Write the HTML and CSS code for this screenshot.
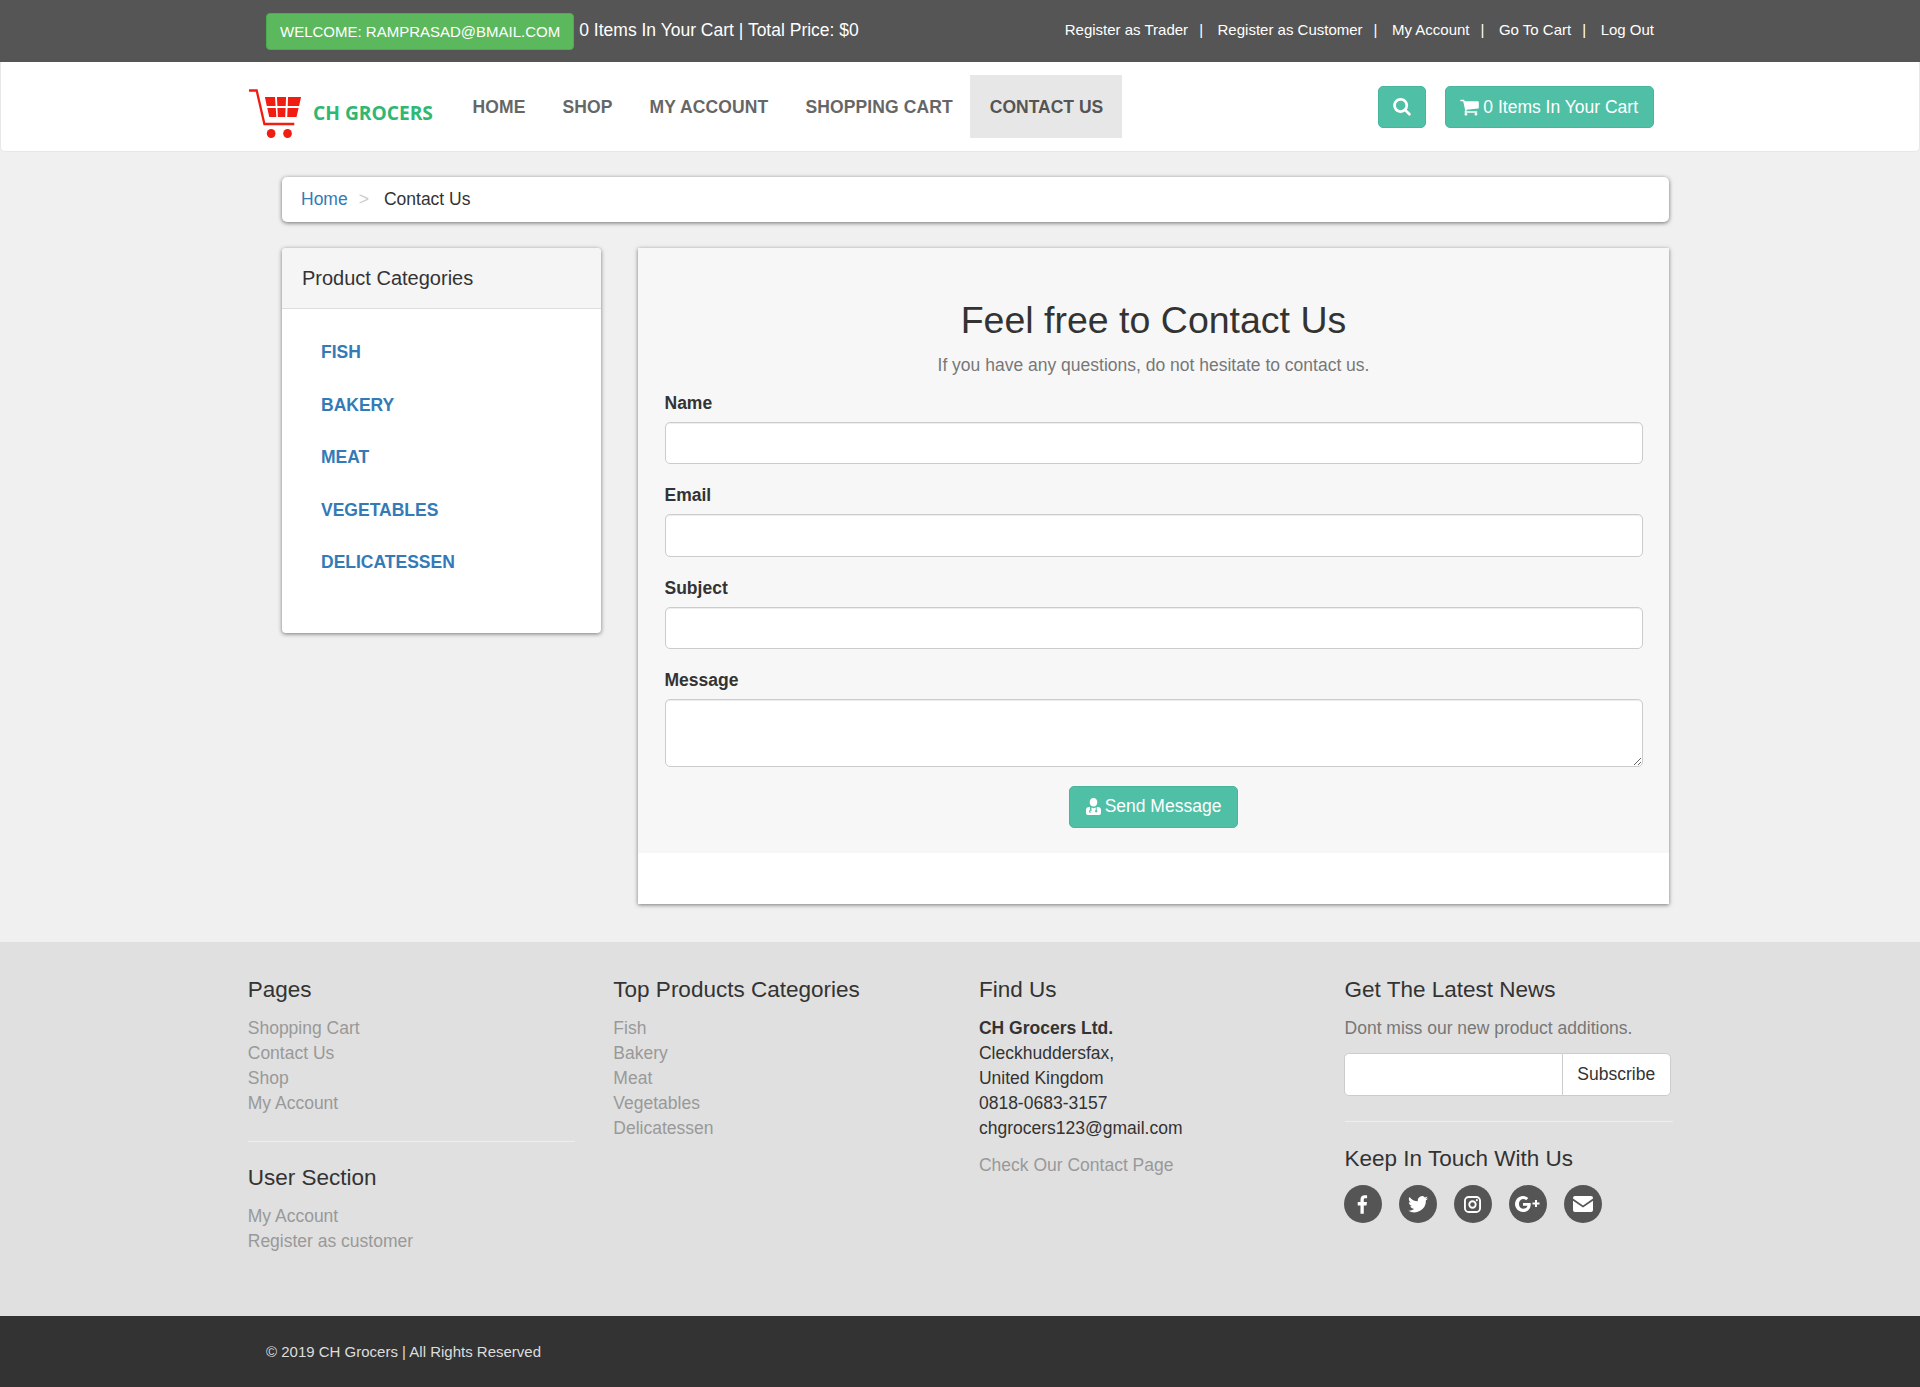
FILE: index.html
```html
<!DOCTYPE html>
<html lang="en">
<head>
<meta charset="utf-8">
<title>Contact Us - CH Grocers</title>
<link rel="stylesheet" href="styles.css">
</head>
<body>
<header class="topbar">
  <div class="topbar-left">
    <a class="welcome" href="#">WELCOME: RAMPRASAD@BMAIL.COM</a>
    <span class="cart-summary">0 Items In Your Cart | Total Price: $0</span>
  </div>
  <nav class="toplinks">
    <a href="#">Register as Trader</a><span>|</span>
    <a href="#">Register as Customer</a><span>|</span>
    <a href="#">My Account</a><span>|</span>
    <a href="#">Go To Cart</a><span>|</span>
    <a href="#">Log Out</a>
  </nav>
</header>

<div class="navbar">
  <a class="brand" href="#">
    <svg class="brand-cart" viewBox="0 0 56 50" width="54" height="50" preserveAspectRatio="none" aria-hidden="true">
      <path d="M1 1.500h8l8 33.500h31" fill="none" stroke="#f21d12" stroke-width="2.400"/>
      <path d="M17.500 8h10.500l.6 9H19.500zM30 8h9.500l-.4 9h-8.600zM41.500 8H55l-2 9H41.200zM20 19h8.800l.6 9h-7.400zM30.500 19h8.500l-.4 9h-7.600zM41 19h11.500l-2.200 9h-9.600z" fill="#f21d12"/>
      <circle cx="24" cy="44.500" r="4.500" fill="#f21d12"/>
      <circle cx="41" cy="44.500" r="4.500" fill="#f21d12"/>
    </svg>
    <span class="brand-name">CH GROCERS</span>
  </a>
  <ul class="mainnav">
    <li><a href="#">HOME</a></li>
    <li><a href="#">SHOP</a></li>
    <li><a href="#">MY ACCOUNT</a></li>
    <li><a href="#">SHOPPING CART</a></li>
    <li class="active"><a href="#">CONTACT US</a></li>
  </ul>
  <div class="nav-actions">
    <a class="btn btn-icon" href="#" aria-label="Search">
      <svg class="ico" viewBox="0 0 1664 1792" width="18" height="19"><path fill="currentColor" d="M1152 704q0-185-131.500-316.500T704 256 387.500 387.500 256 704t131.500 316.500T704 1152t316.500-131.500T1152 704zm512 832q0 52-38 90t-90 38q-54 0-90-38l-343-342q-179 124-399 124-143 0-273.500-55.500t-225-150-150-225T0 704t55.500-273.500 150-225 225-150T704 0t273.500 55.500 225 150 150 225T1408 704q0 220-124 399l343 343q37 37 37 90z"/></svg>
    </a>
    <a class="btn btn-cart" href="#">
      <svg class="ico" viewBox="0 0 1664 1792" width="19" height="20"><path fill="currentColor" d="M640 1536q0 52-38 90t-90 38-90-38-38-90 38-90 90-38 90 38 38 90zm896 0q0 52-38 90t-90 38-90-38-38-90 38-90 90-38 90 38 38 90zm128-1088v512q0 24-16.500 42.500T1607 1024L563 1146q13 60 13 70 0 16-24 64h920q26 0 45 19t19 45-19 45-45 19H448q-26 0-45-19t-19-45q0-11 8-31.500t16-36 21.500-40T445 1207L268 384H64q-26 0-45-19T0 320t19-45 45-19h256q16 0 28.500 6.500T368 278t13 24.500 8 26 5.500 29.500 4.500 26h1201q26 0 45 19t19 45z"/></svg>
      <span>0 Items In Your Cart</span>
    </a>
  </div>
</div>

<main class="content">
  <ol class="breadcrumb">
    <li><a href="#">Home</a></li>
    <li class="sep">&gt;</li>
    <li>Contact Us</li>
  </ol>
  <div class="columns">
    <aside class="sidebar">
      <h3 class="sidebar-title">Product Categories</h3>
      <ul class="categories">
        <li><a href="#">FISH</a></li>
        <li><a href="#">BAKERY</a></li>
        <li><a href="#">MEAT</a></li>
        <li><a href="#">VEGETABLES</a></li>
        <li><a href="#">DELICATESSEN</a></li>
      </ul>
    </aside>
    <section class="panel">
      <form class="contact-form">
        <h1>Feel free to Contact Us</h1>
        <p class="lead">If you have any questions, do not hesitate to contact us.</p>
        <div class="field"><label for="n">Name</label><input id="n" type="text"></div>
        <div class="field"><label for="e">Email</label><input id="e" type="text"></div>
        <div class="field"><label for="s">Subject</label><input id="s" type="text"></div>
        <div class="field"><label for="m">Message</label><textarea id="m"></textarea></div>
        <div class="form-actions">
          <button class="btn btn-send" type="button">
            <svg class="ico" viewBox="0 0 16 18" width="15" height="17"><path fill="currentColor" d="M8 0a4 4 0 0 1 4 4.500A4 4 0 0 1 8 9a4 4 0 0 1-4-4.500A4 4 0 0 1 8 0zM3.500 9.500l.8.300v3A1.700 1.700 0 0 0 3.200 14.400v1.100h2.300v-1h-1.200v-.200a.8.8 0 0 1 1.600 0h0v-1.300a1 1 0 0 0-.1 0V10.100L8 10.800l2.400-.7v2.600a1.300 1.300 0 1 0 1 0V9.800l1.100-.300A3.500 3.500 0 0 1 16 13v3a2 2 0 0 1-2 2H2a2 2 0 0 1-2-2v-3a3.500 3.500 0 0 1 3.500-3.500z"/></svg>
            <span>Send Message</span>
          </button>
        </div>
      </form>
    </section>
  </div>
</main>

<footer class="footer">
  <div class="footer-grid">
    <div class="fcol">
      <h4>Pages</h4>
      <ul class="flinks">
        <li><a href="#">Shopping Cart</a></li>
        <li><a href="#">Contact Us</a></li>
        <li><a href="#">Shop</a></li>
        <li><a href="#">My Account</a></li>
      </ul>
      <hr>
      <h4>User Section</h4>
      <ul class="flinks">
        <li><a href="#">My Account</a></li>
        <li><a href="#">Register as customer</a></li>
      </ul>
    </div>
    <div class="fcol">
      <h4>Top Products Categories</h4>
      <ul class="flinks">
        <li><a href="#">Fish</a></li>
        <li><a href="#">Bakery</a></li>
        <li><a href="#">Meat</a></li>
        <li><a href="#">Vegetables</a></li>
        <li><a href="#">Delicatessen</a></li>
      </ul>
    </div>
    <div class="fcol">
      <h4>Find Us</h4>
      <address>
        <strong>CH Grocers Ltd.</strong><br>
        Cleckhuddersfax,<br>
        United Kingdom<br>
        0818-0683-3157<br>
        chgrocers123@gmail.com
      </address>
      <a class="fcheck" href="#">Check Our Contact Page</a>
    </div>
    <div class="fcol">
      <h4>Get The Latest News</h4>
      <p class="fnote">Dont miss our new product additions.</p>
      <div class="subscribe"><input type="text" aria-label="Email"><button type="button">Subscribe</button></div>
      <hr class="hr-news">
      <h4>Keep In Touch With Us</h4>
      <div class="social">
        <a href="#" aria-label="Facebook"><svg viewBox="0 0 12 20" width="11" height="19"><path fill="#fff" d="M11 .2v3.100H9.200c-1.500 0-1.800.7-1.800 1.800v2.300h3.500L10.400 11H7.400v9H3.800v-9H.8V7.400h3V4.700C3.800 1.700 5.600 0 8.300 0c1.300 0 2.300.1 2.700.2z"/></svg></a>
        <a href="#" aria-label="Twitter"><svg viewBox="0 0 24 20" width="20" height="17"><path fill="#fff" d="M24 2.400c-.9.400-1.800.7-2.800.8 1-.6 1.800-1.600 2.200-2.700-1 .6-2 1-3.100 1.200A4.900 4.900 0 0 0 11.900 6.200C7.800 6 4.200 4.100 1.700.9c-1.300 2.200-.7 5.100 1.500 6.600-.8 0-1.600-.2-2.200-.6 0 2.400 1.700 4.400 3.900 4.900-.7.200-1.500.2-2.200.1.600 2 2.400 3.400 4.600 3.400A9.900 9.900 0 0 1 0 17.300 14 14 0 0 0 21.500 5c1-.7 1.800-1.600 2.500-2.600z"/></svg></a>
        <a href="#" aria-label="Instagram"><svg viewBox="0 0 18 18" width="17" height="17"><rect x="1" y="1" width="16" height="16" rx="4" fill="none" stroke="#fff" stroke-width="2"/><circle cx="9" cy="9" r="3.400" fill="none" stroke="#fff" stroke-width="2"/><circle cx="13.600" cy="4.400" r="1.100" fill="#fff"/></svg></a>
        <a href="#" aria-label="Google Plus"><svg viewBox="0 0 26 16" width="26" height="16"><path fill="#fff" d="M8 7v2.800h4.500c-.4 1.800-1.900 3-4.500 3a5 5 0 0 1 0-9.800c1.300 0 2.400.5 3.200 1.200L13.300 2A8 8 0 1 0 8 16c4.600 0 7.700-3.200 7.700-7.800 0-.4 0-.8-.1-1.200zM22 6.500V4h-2v2.500h-2.500v2H20V11h2V8.500h2.500v-2z"/></svg></a>
        <a href="#" aria-label="Email"><svg viewBox="0 0 20 16" width="20" height="16"><path fill="#fff" d="M2 0h16a2 2 0 0 1 2 2v.6l-10 6.800L0 2.600V2a2 2 0 0 1 2-2zM0 4.800l10 6.600 10-6.600V14a2 2 0 0 1-2 2H2a2 2 0 0 1-2-2z"/></svg></a>
      </div>
    </div>
  </div>
</footer>

<div class="copyright">© 2019 CH Grocers | All Rights Reserved</div>
</body>
</html>
```
FILE: styles.css
```css
* { box-sizing: border-box; }
html, body { margin: 0; padding: 0; }
body {
  font-family: "Liberation Sans", Arial, sans-serif;
  font-size: 17.5px;
  line-height: 25px;
  color: #333;
  background: #f0f0f0;
}
a { text-decoration: none; }
ul, ol { list-style: none; margin: 0; padding: 0; }

/* Top bar */
.topbar {
  height: 62px;
  background: #555;
  color: #fff;
  padding: 0 266px 2px;
  display: flex;
  align-items: center;
  justify-content: space-between;
}
.topbar-left { display: flex; align-items: center; gap: 5px; }
.welcome {
  background: #5cb85c;
  border: 1px solid #4cae4c;
  border-radius: 4px;
  color: #fff;
  font-size: 15px;
  line-height: 22px;
  padding: 7px 13px;
  height: 37px;
  margin-top: 2px;
}
.cart-summary { line-height: 25px; }
.toplinks { display: flex; font-size: 15px; margin-bottom: 2px; }
.toplinks a { color: #fff; }
.toplinks span { margin: 0 14.5px 0 11px; }

/* Main nav */
.navbar {
  height: 90px;
  background: #fff;
  border: 1px solid #e7e7e7;
  border-top: 0;
  border-radius: 0 0 5px 5px;
  padding: 0 265px 0 247px;
  display: flex;
  align-items: center;
}
.brand { display: flex; align-items: flex-start; width: 206px; height: 50px; margin-top: 14px; }
.brand-cart { flex: none; }
.brand-name {
  font-family: "Open Sans", sans-serif;
  font-weight: 700;
  font-size: 19.200px;
  line-height: 24px;
  color: #2eb872;
  margin: 12px 0 0 11px;
  white-space: nowrap;
}
.mainnav { display: flex; height: 62.5px; }
.mainnav a {
  display: block;
  padding: 1px 18.5px 0;
  line-height: 62.5px;
  height: 62.5px;
  font-weight: 700;
  letter-spacing: .12px;
  color: #666;
}
.mainnav .active a {
  margin-left: -1px;
  padding: 1px 18.5px 0 19.5px;
  letter-spacing: 0;
  background: #e7e7e7;
  color: #555;
}
.nav-actions { margin-left: auto; display: flex; gap: 19px; }
.btn {
  display: inline-flex;
  align-items: center;
  justify-content: center;
  gap: 4px;
  height: 42px;
  padding: 0 16px;
  background: #4fbfa6;
  border: 1px solid #48b69d;
  border-radius: 5px;
  color: #fff;
  font: inherit;
}
.btn-icon { width: 48px; padding: 2px 0 0; }
.btn-cart { padding: 1px 15px 0 14px; }
.btn-send { padding: 0 15.25px 2px; }
.ico { flex: none; }

/* Content */
.content { padding: 25px 251px 38px 282px; }
.breadcrumb {
  display: flex;
  align-items: center;
  height: 45px;
  padding: 0 19px;
  background: #fff;
  border-radius: 5px;
  box-shadow: 0 1px 4px rgba(0,0,0,.55);
  margin-bottom: 26px;
}
.breadcrumb a { color: #337ab7; }
.breadcrumb .sep { color: #ccc; padding: 0 15px 0 11px; }
.columns { display: flex; align-items: flex-start; gap: 37px; }

.sidebar {
  width: 319px;
  height: 385px;
  flex: none;
  background: #fff;
  border-radius: 4px;
  box-shadow: 0 1px 4px rgba(0,0,0,.5);
  overflow: hidden;
}
.sidebar-title {
  margin: 0;
  height: 61px;
  padding: 0 20px;
  background: #f5f5f5;
  border-bottom: 1px solid #ddd;
  font-size: 20px;
  font-weight: 400;
  line-height: 60px;
}
.categories { padding: 17px 39px; }
.categories li { height: 52.5px; line-height: 52.5px; }
.categories a { color: #337ab7; font-weight: 700; }

.panel {
  flex: 1;
  height: 656px;
  padding-bottom: 51px;
  background: #fff;
  box-shadow: 0 1px 4px rgba(0,0,0,.5);
}
.contact-form { height: 100%; background: #f7f7f7; padding: 52px 26.500px 0; }
.contact-form h1 {
  margin: 0;
  text-align: center;
  font-size: 37.5px;
  line-height: 41px;
  font-weight: 400;
}
.lead { margin: 11.700px 0 0; text-align: center; color: #777; }
.field { margin-top: 13px; }
.field + .field { margin-top: 19px; }
.field label { display: block; font-weight: 700; height: 25px; margin-bottom: 6px; }
.field input, .field textarea {
  display: block;
  width: 100%;
  height: 42.5px;
  padding: 7px 15px;
  background: #fff;
  border: 1px solid #ccc;
  border-radius: 5px;
  box-shadow: inset 0 1px 1px rgba(0,0,0,.075);
  font: inherit;
}
.field textarea { height: 68px; }
.form-actions { margin-top: 19px; display: flex; justify-content: center; }

/* Footer */
.footer { height: 374px; background: #e0e0e0; padding: 35px 0 0 247.75px; }
.footer-grid { display: grid; grid-template-columns: repeat(4, 365.6px); }
.fcol { padding-right: 38px; color: #333; }
.fcol h4 { margin: 0; font-size: 22.500px; font-weight: 400; line-height: 25px; color: #333; }
.fcol hr { margin: 25px 0 23px; border: 0; border-top: 1px solid #eee; }
.flinks { margin-top: 14px; }
.flinks a, .fcheck { color: #999; }
.fnote { margin: 14px 0 0; color: #777; }
address { margin: 14px 0 0; font-style: normal; }
.fcheck { display: block; margin-top: 12px; }
.subscribe { display: flex; height: 43px; margin: 12px 0 0 -.75px; width: 327px; }
.subscribe input {
  flex: 1;
  min-width: 0;
  border: 1px solid #ccc;
  border-radius: 5px 0 0 5px;
  background: #fff;
}
.subscribe button {
  width: 109px;
  margin-left: -1px;
  border: 1px solid #ccc;
  border-radius: 0 5px 5px 0;
  background: #fff;
  color: #333;
  font: inherit;
}
.fcol .hr-news { margin: 25px 0 24px; width: 328px; }
.social { display: flex; gap: 17px; margin: 14px 0 0 -.75px; }
.social a {
  width: 38px;
  height: 38px;
  border-radius: 50%;
  background: #555;
  display: flex;
  align-items: center;
  justify-content: center;
}

.copyright {
  height: 71px;
  background: #333;
  color: #ddd;
  font-size: 15px;
  line-height: 71px;
  padding-left: 266px;
}
```
